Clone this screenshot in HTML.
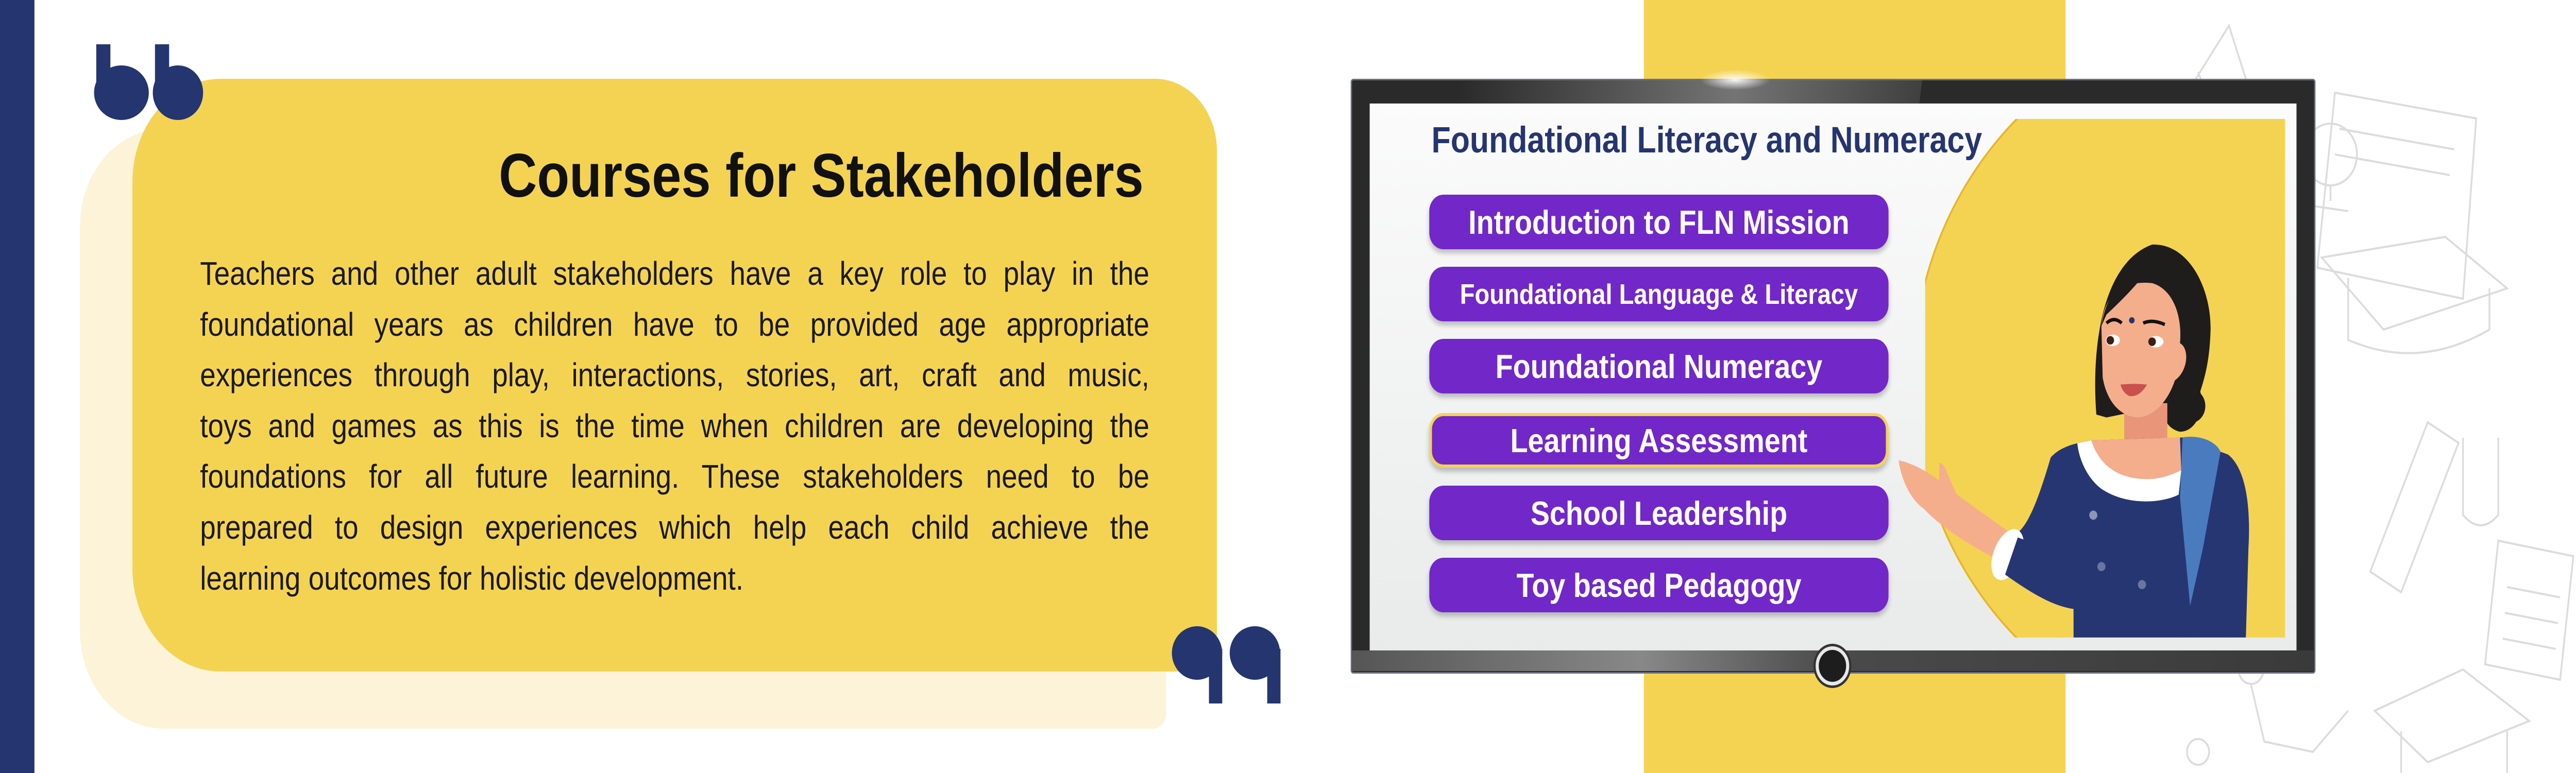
<!DOCTYPE html>
<html><head><meta charset="utf-8"><style>
*{margin:0;padding:0;box-sizing:border-box}
html,body{width:100%;height:100%;overflow:hidden;background:#fff}
#sv{position:fixed;left:0;top:0;width:100vw;height:100vh;display:block}
.pg{width:5834px;height:1501px;position:relative;overflow:hidden;background:#fff;font-family:"Liberation Sans",sans-serif}
.abs{position:absolute}
.title{right:3244px;top:272px;font-weight:bold;font-size:120px;color:#111;white-space:nowrap}
.body{left:453px;top:482px;width:2150px;font-size:64px;line-height:98.6px;color:#1a1a1a}
.body span{display:block;text-align:justify;text-align-last:justify;white-space:nowrap}
.body span.l{text-align-last:left}
.btn{position:absolute;left:3237px;width:1040px;height:106px;background:#7227c9;border-radius:32px;color:#fff;font-weight:bold;font-size:65px;display:flex;align-items:center;justify-content:center;box-shadow:0 8px 10px rgba(0,0,0,.22);white-space:nowrap}
</style></head><body>
<svg id="sv" viewBox="0 0 5834 1501" preserveAspectRatio="none" xmlns="http://www.w3.org/2000/svg">
<foreignObject x="0" y="0" width="5834" height="1501">
<div xmlns="http://www.w3.org/1999/xhtml" class="pg">
<div class="abs" style="left:0;top:0;width:78px;height:1501px;background:#253570"></div>
<div class="abs" style="left:181px;top:250px;width:2460px;height:1165px;background:#fcf3d8;border-radius:190px 0 30px 190px"></div>
<div class="abs" style="left:300px;top:153px;width:2456px;height:1151px;background:#f4d353;border-radius:200px 140px 0 200px"></div>
<svg class="abs" style="left:0;top:0" width="2950" height="1501">
<g fill="#253570">
<rect x="218" y="86" width="32" height="80"/><ellipse cx="275" cy="180" rx="62" ry="53"/>
<rect x="351" y="86" width="32" height="80"/><ellipse cx="403" cy="180" rx="57" ry="53"/>
<rect x="2738" y="1260" width="30" height="106"/><ellipse cx="2711" cy="1268" rx="57" ry="52"/>
<rect x="2870" y="1260" width="30" height="106"/><ellipse cx="2842" cy="1268" rx="57" ry="52"/>
</g></svg>
<div class="abs title">Courses for Stakeholders</div>
<div class="abs body">
<span>Teachers and other adult stakeholders have a key role to play in the</span>
<span>foundational years as children have to be provided age appropriate</span>
<span>experiences through play, interactions, stories, art, craft and music,</span>
<span>toys and games as this is the time when children are developing the</span>
<span>foundations for all future learning. These stakeholders need to be</span>
<span>prepared to design experiences which help each child achieve the</span>
<span class="l">learning outcomes for holistic development.</span>
</div>

<div class="abs" style="left:3723px;top:0;width:955px;height:1501px;background:#f4d353"></div>
<svg class="abs" style="left:4678px;top:0" width="1156" height="1501" fill="none" stroke="#dcdcdc" stroke-width="4">
<path d="M370 50 L500 400 L260 730 L130 380 Z"/><path d="M300 140 L440 450"/><path d="M170 420 L360 330 M200 490 L400 400 M230 560 L420 470 M260 630 L440 540"/>
<circle cx="140" cy="390" r="28"/><circle cx="310" cy="350" r="22"/><path d="M300 440 L220 530 L240 640 L330 660 L400 570 L380 460 Z"/><circle cx="140" cy="540" r="22"/><circle cx="330" cy="750" r="25"/>
<path d="M610 180 L930 230 L900 580 L570 520 Z"/><path d="M620 250 L880 290 M610 300 L870 340"/>
<circle cx="600" cy="300" r="60"/><path d="M600 360 L600 390 M560 400 L640 410"/>
<path d="M580 500 L860 460 L1000 560 L720 640 Z"/><path d="M640 540 L640 660 Q800 720 960 640 L960 560"/>
<path d="M820 820 L890 860 L760 1150 L690 1110 Z"/><path d="M380 1000 L500 1080 L400 1280 L280 1200 Z"/>
<path d="M980 1050 L1150 1080 L1120 1320 L950 1290 Z"/><path d="M1000 1140 L1120 1160 M995 1190 L1115 1210 M990 1240 L1110 1260"/>
<circle cx="420" cy="1300" r="28"/><path d="M420 1330 L450 1440 L560 1460 L640 1380"/><circle cx="300" cy="1460" r="25"/>
<path d="M700 1380 L900 1300 L1050 1400 L820 1480 Z"/><path d="M760 1420 L760 1501 M1000 1420 L1000 1501"/>
<path d="M900 850 L900 1000 Q940 1040 980 1000 L980 850"/>
</svg>

<div class="abs" style="left:3059px;top:153px;width:2185px;height:1155px;background:#2a2a2a;border-radius:6px;border:3px solid #6a7080"></div>
<div class="abs" style="left:3300px;top:156px;width:1050px;height:45px;background:linear-gradient(90deg,rgba(255,255,255,0),rgba(255,255,255,.35) 60%,rgba(255,255,255,.1));transform:skewX(-8deg)"></div>
<div class="abs" style="left:3850px;top:135px;width:160px;height:40px;border-radius:50%;background:radial-gradient(rgba(255,255,255,.95),rgba(255,255,255,0) 70%)"></div>
<div class="abs" style="left:3062px;top:1263px;width:2179px;height:40px;background:linear-gradient(90deg,#555,#888 30%,#4a4a4a 50%,#3a3a3a)"></div>
<div class="abs" style="left:3102px;top:201px;width:2099px;height:1062px;background:linear-gradient(180deg,#fbfbfb,#e9ebeb)"></div>
<svg class="abs" style="left:3102px;top:201px" width="2099" height="1062">
<defs><clipPath id="c"><rect x="1258" y="30" width="815" height="1007"/></clipPath></defs>
<g clip-path="url(#c)"><ellipse cx="2000" cy="534" rx="770" ry="700" fill="#f4d353" stroke="#e8b52a" stroke-width="4"/></g>
</svg>
<div class="abs" style="left:3242px;top:232px;font-weight:bold;font-size:71px;color:#253570;white-space:nowrap">Foundational Literacy and Numeracy</div>
<div class="btn" style="top:378px">Introduction to FLN Mission</div>
<div class="btn" style="top:518px;font-size:55px">Foundational Language &amp; Literacy</div>
<div class="btn" style="top:658px">Foundational Numeracy</div>
<div class="btn" style="top:802px;border:6px solid #f4d353">Learning Assessment</div>
<div class="btn" style="top:943px">School Leadership</div>
<div class="btn" style="top:1083px">Toy based Pedagogy</div>

<svg class="abs" style="left:4300px;top:400px" width="900" height="870" viewBox="0 0 1568 1568" preserveAspectRatio="none">
<path d="M780 730 C760 500 800 200 1000 135 C1150 130 1240 300 1230 450 C1225 560 1200 620 1190 650 C1210 700 1180 790 1110 790 C1060 780 1040 740 1040 700 L820 740 Z" fill="#1f1c1c"/>
<circle cx="1150" cy="700" r="60" fill="#1f1c1c"/>
<rect x="890" y="690" width="170" height="220" fill="#e8957a"/>
<path d="M800 420 C810 300 900 260 1000 270 C1080 290 1120 380 1110 480 C1150 500 1140 580 1090 610 C1060 690 1000 740 940 740 C870 735 820 680 805 600 Z" fill="#f4ae8c"/>
<path d="M800 420 C820 300 900 230 1000 200 C960 260 880 330 820 380 Z" fill="#1f1c1c"/>
<circle cx="920" cy="400" r="11" fill="#253570"/>
<path d="M820 410 Q850 385 880 410 M965 410 Q1000 395 1050 415" stroke="#111" stroke-width="12" fill="none"/>
<ellipse cx="845" cy="470" rx="28" ry="20" fill="#fff"/><circle cx="835" cy="470" r="15" fill="#3a1f18"/>
<ellipse cx="1015" cy="475" rx="30" ry="20" fill="#fff"/><circle cx="1000" cy="475" r="15" fill="#3a1f18"/>
<path d="M875 625 Q930 620 980 625 Q950 670 910 665 Q885 655 875 625 Z" fill="#c9504d"/>
<path d="M600 880 C640 840 700 830 760 820 L1120 810 L1300 870 C1370 920 1390 1050 1380 1200 L1370 1510 L690 1510 L690 1410 C600 1400 520 1340 470 1300 L440 1160 C500 1140 540 1060 600 880 Z" fill="#263673"/>
<path d="M760 820 C800 930 900 960 1000 955 C1060 950 1100 930 1115 925 L1110 810 Z" fill="#f4ae8c"/>
<path d="M705 830 L760 820 C800 930 900 960 1000 955 C1060 950 1100 930 1115 925 L1105 1010 C1040 1040 900 1050 800 990 C740 950 710 880 705 830 Z" fill="#fff"/>
<path d="M1120 810 C1180 800 1250 820 1270 860 L1200 1200 L1150 1400 L1110 1020 Z" fill="#4b7bbf"/>
<path d="M0 890 C60 900 130 940 160 960 L160 900 C180 890 200 960 230 1010 L450 1150 L420 1250 C300 1200 160 1120 100 1060 C50 1030 10 960 0 890 Z" fill="#f4ae8c"/>
<ellipse cx="430" cy="1220" rx="55" ry="95" transform="rotate(25 430 1220)" fill="#fff"/>
<path d="M470 1160 L600 1200 L690 1410 C600 1400 500 1340 420 1290 Z" fill="#263673"/>
<circle cx="768" cy="1082" r="16" fill="#8d95b5"/><circle cx="800" cy="1262" r="16" fill="#6a76a0"/><circle cx="960" cy="1325" r="16" fill="#6a76a0"/>
</svg>
<div class="abs" style="left:4112px;top:1255px;width:76px;height:76px;border-radius:50%;background:#1d1d1d;border:7px solid #e8e8e8;box-shadow:0 0 0 5px #333"></div>
</div>
</foreignObject>
</svg>
</body></html>
